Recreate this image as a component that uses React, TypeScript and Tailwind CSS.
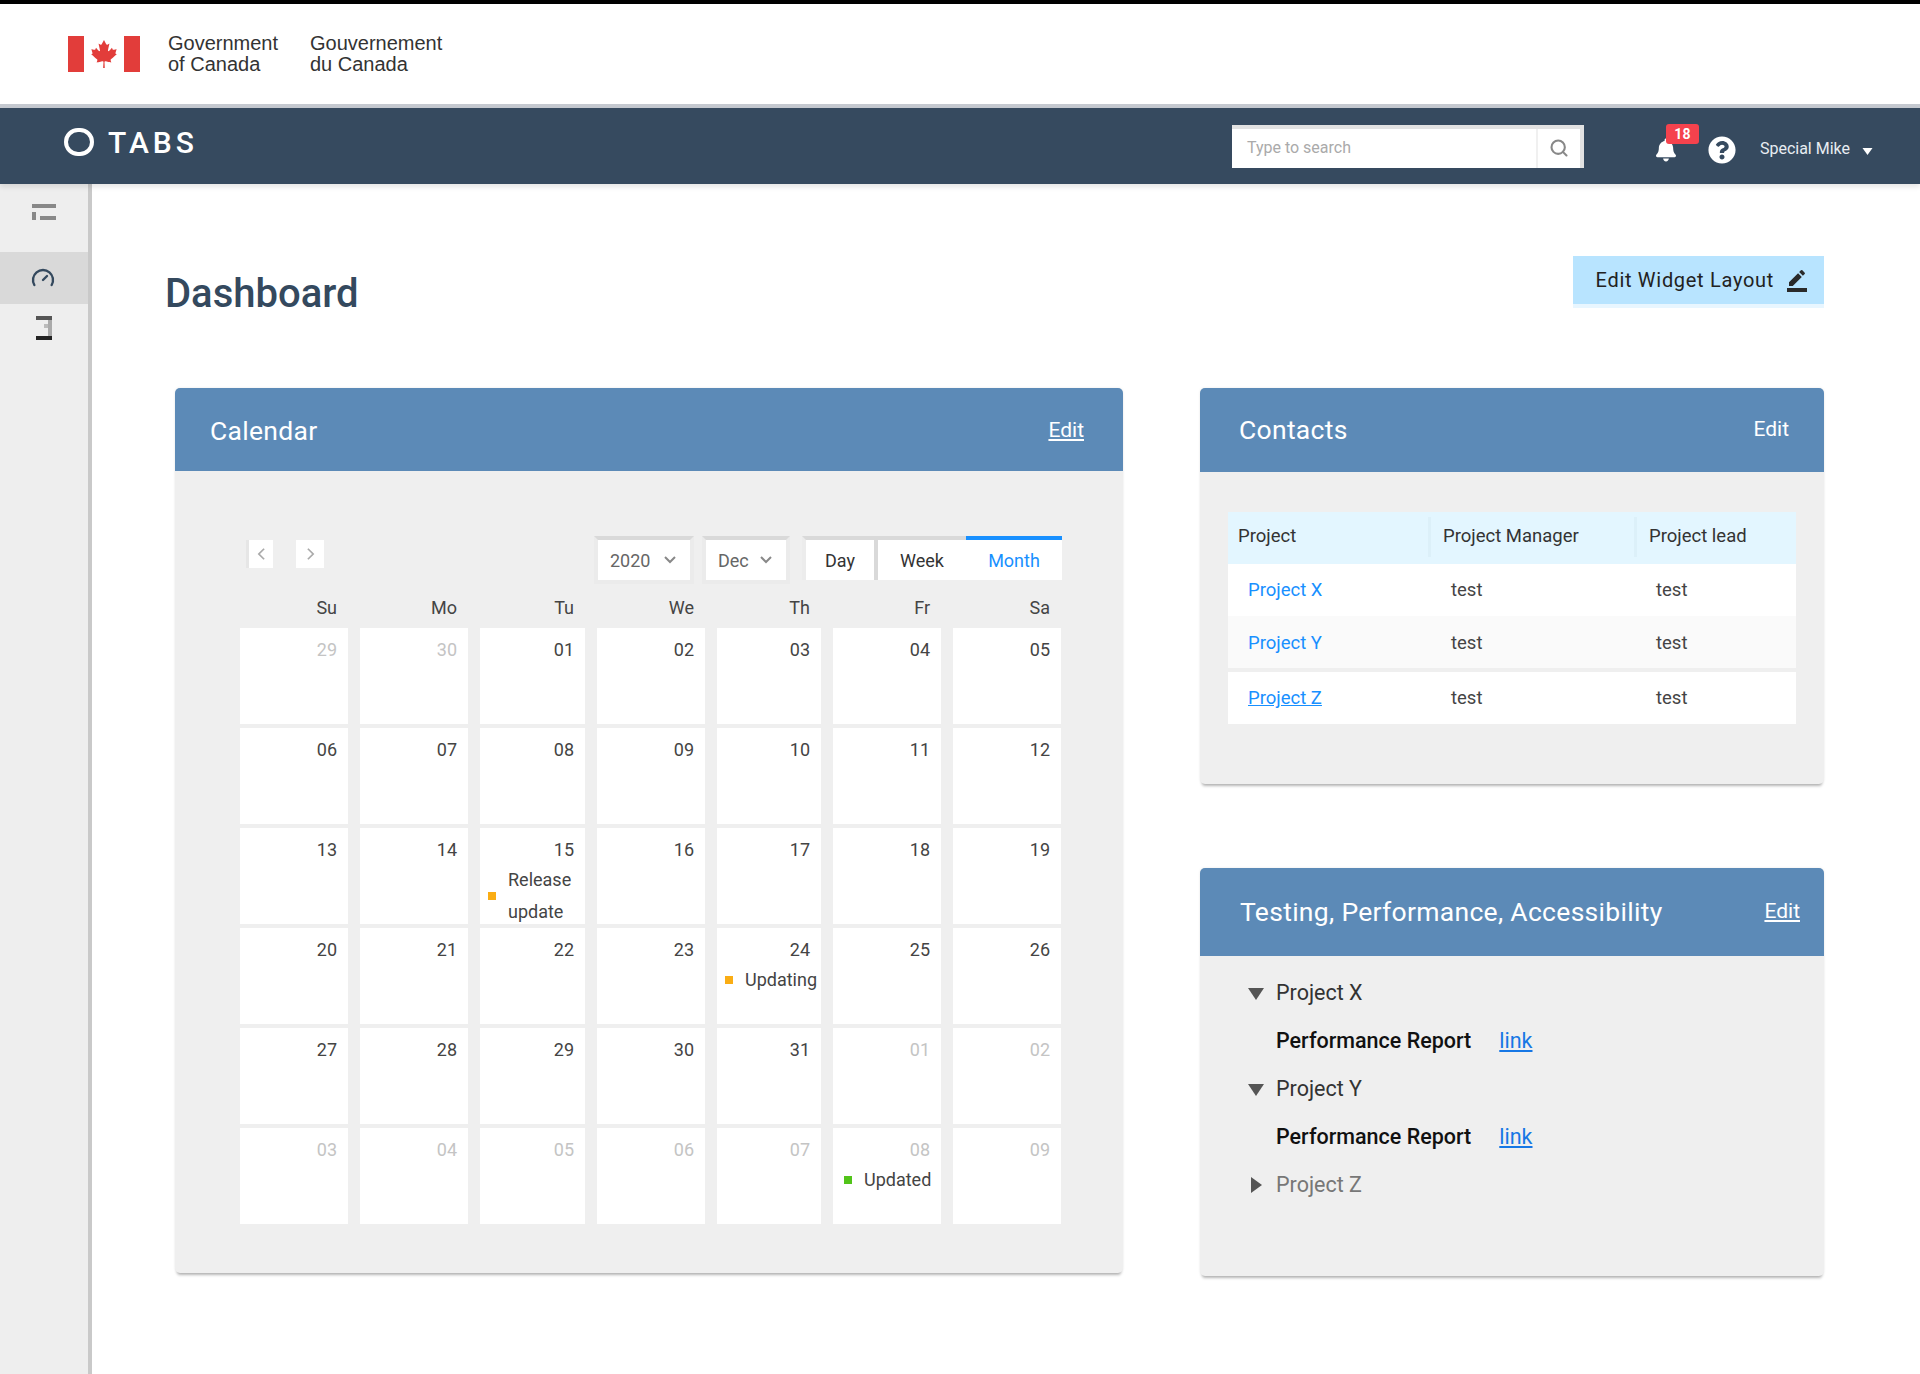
import { Gauge, Search } from "lucide-react";
import { FaBell, FaCanadianMapleLeaf, FaQuestionCircle } from "react-icons/fa";
import { MdBorderColor } from "react-icons/md";

const weekdays = ["Su", "Mo", "Tu", "We", "Th", "Fr", "Sa"];

type Cell = { d: string; muted?: boolean; event?: { text: string; color: string; inset: string } };

const m = (d: string): Cell => ({ d, muted: true });
const c = (d: string): Cell => ({ d });

const cells: Cell[] = [
  m("29"), m("30"), c("01"), c("02"), c("03"), c("04"), c("05"),
  c("06"), c("07"), c("08"), c("09"), c("10"), c("11"), c("12"),
  c("13"), c("14"),
  { d: "15", event: { text: "Release update", color: "bg-[#faad14]", inset: "pl-2" } },
  c("16"), c("17"), c("18"), c("19"),
  c("20"), c("21"), c("22"), c("23"),
  { d: "24", event: { text: "Updating", color: "bg-[#faad14]", inset: "pl-2" } },
  c("25"), c("26"),
  c("27"), c("28"), c("29"), c("30"), c("31"), m("01"), m("02"),
  m("03"), m("04"), m("05"), m("06"), m("07"),
  { d: "08", muted: true, event: { text: "Updated", color: "bg-[#52c41a]", inset: "pl-[11px]" } },
  m("09"),
];

const GRID = "grid grid-cols-[108px_108px_105px_108px_104px_108px_108px] gap-x-3";

function Caret({ className }: { className: string }) {
  return (
    <svg viewBox="0 0 10 10" className={className} fill="currentColor">
      <path d="M0 2h10L5 9z" />
    </svg>
  );
}

function Chevron({ left }: { left?: boolean }) {
  return (
    <svg viewBox="0 0 10 16" className="h-[14px] w-[9px] text-[#aaa]" fill="none" stroke="currentColor" strokeWidth="2">
      <path d={left ? "M8 2 2 8l6 6" : "M2 2l6 6-6 6"} />
    </svg>
  );
}

function SelectBox({ label, w }: { label: string; w: string }) {
  return (
    <div className={`flex h-12 items-center justify-between border-4 border-[#ebebeb] border-t-[#d9d9d9] bg-white pr-[14px] pl-3 text-[#666] ${w}`}>
      <span>{label}</span>
      <svg viewBox="0 0 12 8" className="h-2 w-3" fill="none" stroke="#888" strokeWidth="2">
        <path d="M1 1l5 5 5-5" />
      </svg>
    </div>
  );
}

function CardHeader({ title, edit, height, pad, underline, editPad }: { title: string; edit: string; height: string; pad: string; underline?: boolean; editPad: string }) {
  return (
    <div className={`flex items-center justify-between rounded-t-[5px] bg-[#5c8ab7] text-white ${height} ${pad} ${editPad}`}>
      <span className="text-[26.5px] leading-none tracking-[0.3px]">{title}</span>
      <span className={`text-[21px] ${underline ? "underline" : ""}`}>{edit}</span>
    </div>
  );
}

const cardClass = "rounded-[5px] bg-[#efefef] shadow-[0_4px_3px_-2px_rgba(0,0,0,0.28),0_0_3px_rgba(0,0,0,0.08)]";

function Calendar() {
  return (
    <section className={`h-[885px] w-[948px] ${cardClass}`}>
      <CardHeader title="Calendar" edit="Edit" height="h-[83px] pt-[3px]" pad="pl-[35px]" editPad="pr-[39px]" underline />
      <div className="px-[65px] pt-[65px] text-[18px]">
        <div className="flex h-12 items-start justify-between">
          <div className="flex gap-[23px] pt-1 pl-[6px]">
            <div className="flex h-7 w-[27px] items-center justify-center border-l-[3px] border-[#e6e6e6] bg-white"><Chevron left /></div>
            <div className="flex h-7 w-[28px] items-center justify-center bg-white"><Chevron /></div>
          </div>
          <div className="-mr-1 flex">
            <SelectBox label="2020" w="w-[100px]" />
            <div className="w-2" />
            <SelectBox label="Dec" w="w-[88px]" />
            <div className="w-3" />
            <div className="flex h-11 items-stretch">
              <div className="flex w-[76px] items-center justify-center border-t-4 border-r-4 border-l-4 border-[#ececec] border-t-[#d9d9d9] border-r-[#d9d9d9] bg-white text-[#333]">Day</div>
              <div className="flex w-[88px] items-center justify-center border-t-4 border-[#d9d9d9] bg-white text-[#333]">Week</div>
              <div className="flex w-[96px] items-center justify-center border-t-4 border-[#1890ff] bg-white text-[#1890ff]">Month</div>
            </div>
          </div>
        </div>
        <div className={`${GRID} h-11 items-center pt-[2px] text-[#444]`}>
          {weekdays.map((d) => (
            <div key={d} className="pr-[11px] text-right">{d}</div>
          ))}
        </div>
        <div className={`${GRID} gap-y-1`}>
          {cells.map((cell, i) => (
            <div key={i} className="h-24 bg-white">
              <div className={`h-9 pt-2 pr-[11px] text-right leading-7 ${cell.muted ? "text-[#c4c4c4]" : "text-[#444]"}`}>{cell.d}</div>
              {cell.event && (
                <div className={`flex items-center gap-3 leading-8 text-[#444] ${cell.event.inset}`}>
                  <span className={`h-2 w-2 shrink-0 ${cell.event.color}`} />
                  <span className="overflow-hidden">{cell.event.text}</span>
                </div>
              )}
            </div>
          ))}
        </div>
      </div>
    </section>
  );
}

function Contacts() {
  const cols = "grid grid-cols-[205px_206px_157px] items-center";
  const rows = [
    { name: "Project X", bg: "bg-white pt-[2px]" },
    { name: "Project Y", bg: "bg-[#fafafa] mb-1 pt-1" },
    { name: "Project Z", bg: "bg-white pt-[2px]", underline: true },
  ];
  return (
    <section className={`h-[396px] ${cardClass}`}>
      <CardHeader title="Contacts" edit="Edit" height="h-[84px]" pad="pl-[39px]" editPad="pr-[35px]" />
      <div className="px-7 pt-10 text-[18.5px] text-[#444]">
        <div className={`${cols} h-[52px] bg-[#e3f6ff] pb-[2px] text-[#333]`}>
          <div className="flex h-10 items-center justify-between pr-[2px] pl-[10px]">Project<span className="h-10 w-[3px] bg-[#dcf0f9]" /></div>
          <div className="flex h-10 items-center justify-between pr-[2px] pl-[10px]">Project Manager<span className="h-10 w-[3px] bg-[#dcf0f9]" /></div>
          <div className="pl-[10px]">Project lead</div>
        </div>
        {rows.map((r) => (
          <div key={r.name} className={`${cols} h-[52px] ${r.bg}`}>
            <a className={`pl-5 text-[#1890ff] ${r.underline ? "underline" : ""}`}>{r.name}</a>
            <span className="pl-[18px]">test</span>
            <span className="pl-[17px]">test</span>
          </div>
        ))}
      </div>
    </section>
  );
}

function TreeRow({ label, open, muted }: { label: string; open: boolean; muted?: boolean }) {
  return (
    <div className={`flex h-12 items-center gap-3 ${muted ? "text-[#777]" : "text-[#333]"}`}>
      <svg viewBox="0 0 16 16" className="h-4 w-4 text-[#555]" fill="currentColor">
        <path d={open ? "M0 3h16L8 15z" : "M3 0l11 8-11 8z"} />
      </svg>
      <span>{label}</span>
    </div>
  );
}

function ReportRow() {
  return (
    <div className="flex h-12 items-center pl-7 font-medium text-[#111]">
      <span>Performance Report</span>
      <a className="ml-7 font-normal text-[#1677e5] underline">link</a>
    </div>
  );
}

function Testing() {
  return (
    <section className={`h-[408px] ${cardClass}`}>
      <CardHeader title="Testing, Performance, Accessibility" edit="Edit" height="h-[88px]" pad="pl-10" editPad="pr-6" underline />
      <div className="px-12 pt-[13px] text-[21.5px]">
        <TreeRow label="Project X" open />
        <ReportRow />
        <TreeRow label="Project Y" open />
        <ReportRow />
        <TreeRow label="Project Z" open={false} muted />
      </div>
    </section>
  );
}

export default function App() {
  return (
    <div className="flex min-h-[1374px] flex-col bg-white font-['Roboto',sans-serif]">
      <div className="h-1 bg-black" />
      <header className="flex h-[100px] items-center border-b-0 bg-white pl-[68px]">
        <div className="flex h-9 w-[72px] items-center justify-between">
          <div className="h-9 w-4 bg-[#e23d3a]" />
          <FaCanadianMapleLeaf className="h-7 w-7 text-[#e23d3a]" />
          <div className="h-9 w-4 bg-[#e23d3a]" />
        </div>
        <div className="ml-7 w-[142px] font-['Liberation_Sans',sans-serif] text-[20px] leading-[21px] text-[#333]">Government<br />of Canada</div>
        <div className="font-['Liberation_Sans',sans-serif] text-[20px] leading-[21px] text-[#333]">Gouvernement<br />du Canada</div>
      </header>
      <div className="h-1 bg-[#c5c9d0]" />
      <nav className="relative z-10 flex h-[76px] items-center bg-[#364a5f] pl-16 text-white shadow-[0_3px_5px_rgba(0,0,0,0.1)]">
        <div className="mb-2 h-[28px] w-[30px] rounded-full border-4 border-white" />
        <span className="mb-[7px] ml-[14px] text-[30px] leading-none font-medium tracking-[4px]">TABS</span>
        <div className="ml-auto flex h-[43px] w-[352px] items-stretch border-t-4 border-r-4 border-[#e2e2e2] bg-white">
          <div className="flex flex-1 items-center pl-[15px] text-[16px] text-[#aaa]">Type to search</div>
          <div className="flex w-[44px] items-center justify-center border-l-2 border-[#f0f0f0]">
            <Search size={20} strokeWidth={2.5} className="text-[#888]" />
          </div>
        </div>
        <div className="relative mt-[8px] ml-[72px] h-7 w-5">
          <FaBell className="h-7 w-5 text-white" />
          <span className="absolute -top-[12px] left-[10px] flex h-5 w-[33px] items-center justify-center rounded-[3px] bg-[#f5424d] text-[14px] font-bold">18</span>
        </div>
        <FaQuestionCircle className="mt-[8px] ml-8 h-[30px] w-[28px] text-white" />
        <span className="mt-[6px] ml-6 text-[16px] text-[#e8edf2]">Special Mike</span>
        <Caret className="mt-[10px] ml-3 h-[10px] w-[11px] text-white" />
        <div className="w-[47px]" />
      </nav>
      <div className="flex flex-1">
        <aside className="w-[92px] shrink-0 border-r-4 border-[#c9c9c9] bg-[#eeeeee]">
          <div className="h-[68px] pt-5 pl-8">
            <svg viewBox="0 0 24 16" className="h-4 w-6" fill="#888">
              <rect width="24" height="4" />
              <rect y="8" width="4" height="8" />
              <rect x="8" y="12" width="16" height="4" />
            </svg>
          </div>
          <div className="flex h-[52px] items-center bg-[#d9d9d9] pl-[31px]">
            <Gauge size={24} strokeWidth={2.4} className="text-[#34495e]" />
          </div>
          <div className="flex h-12 items-center pl-9">
            <svg viewBox="0 0 16 24" className="h-6 w-4">
              <rect width="16" height="4" fill="#555" />
              <rect x="12" y="4" width="4" height="16" fill="#aaa" />
              <rect x="8" y="8" width="4" height="4" fill="#bbb" />
              <rect y="20" width="16" height="4" fill="#222" />
            </svg>
          </div>
        </aside>
        <main className="flex-1 pr-24 pl-[73px]">
          <div className="flex h-[204px] items-start justify-between pt-[72px]">
            <h1 className="mt-[14px] text-[40px] leading-[48px] font-medium text-[#34495e]">Dashboard</h1>
            <button className="flex h-12 w-[251px] items-center justify-end gap-[11px] bg-[#b8e4ff] pr-[15px] text-[20px] tracking-[0.7px] text-[#222] shadow-[0_4px_0_#e8f6ff]">
              Edit Widget Layout
              <MdBorderColor className="h-6 w-6 text-[#2a2a2a]" />
            </button>
          </div>
          <div className="flex items-start gap-[77px] pl-[10px]">
            <Calendar />
            <div className="flex flex-1 flex-col gap-[84px]">
              <Contacts />
              <Testing />
            </div>
          </div>
        </main>
      </div>
    </div>
  );
}
